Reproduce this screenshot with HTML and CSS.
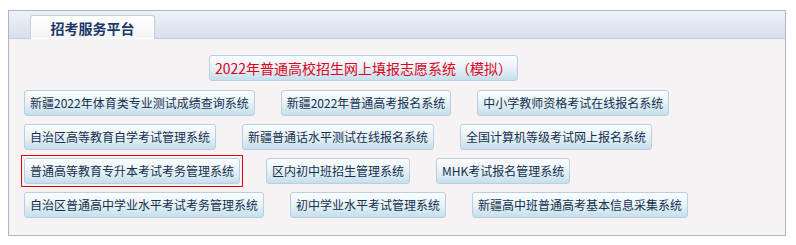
FILE: index.html
```html
<!DOCTYPE html>
<html>
<head>
    <meta charset="utf-8">
    <title>招考服务平台</title>
    <link rel="stylesheet" href="styles.css">
</head>
<body>
    <div class="panel">
        <div class="panel-head">
            <div class="tab">招考服务平台</div>
        </div>
        <div class="panel-body">
            <div class="row row-main">
                <a class="btn btn-main" href="#">2022年普通高校招生网上填报志愿系统（模拟）</a>
            </div>
            <div class="row">
                <a class="btn" href="#">新疆2022年体育类专业测试成绩查询系统</a>
                <a class="btn" href="#">新疆2022年普通高考报名系统</a>
                <a class="btn" href="#">中小学教师资格考试在线报名系统</a>
            </div>
            <div class="row">
                <a class="btn" href="#">自治区高等教育自学考试管理系统</a>
                <a class="btn" href="#">新疆普通话水平测试在线报名系统</a>
                <a class="btn" href="#">全国计算机等级考试网上报名系统</a>
            </div>
            <div class="row">
                <a class="btn btn-marked" href="#">普通高等教育专升本考试考务管理系统</a>
                <a class="btn" href="#">区内初中班招生管理系统</a>
                <a class="btn" href="#">MHK考试报名管理系统</a>
            </div>
            <div class="row">
                <a class="btn" href="#">自治区普通高中学业水平考试考务管理系统</a>
                <a class="btn" href="#">初中学业水平考试管理系统</a>
                <a class="btn" href="#">新疆高中班普通高考基本信息采集系统</a>
            </div>
        </div>
    </div>
</body>
</html>
```

FILE: styles.css
```css
body {
    margin: 0;
    background: #ffffff;
    font-family: "Noto Sans CJK SC", "Liberation Sans", sans-serif;
}
.panel {
    width: 776px;
    margin: 10px 0 0 8px;
    border: 1px solid #a9b6cc;
    background: #f7f3f5;
}
.panel-head {
    height: 27px;
    background: linear-gradient(#eef2f8, #d8e0ec);
    border-bottom: 1px solid #c3cddd;
    position: relative;
}
.tab {
    position: absolute;
    left: 21px;
    top: 4px;
    width: 123px;
    height: 23px;
    border: 1px solid #c2cddd;
    border-bottom: none;
    border-radius: 3px 3px 0 0;
    background: linear-gradient(#ffffff, #f2f4f9);
    box-shadow: inset 0 0 0 1px #ffffff;
    color: #1d3766;
    font-size: 14px;
    font-weight: bold;
    line-height: 25px;
    text-align: center;
}
.panel-body {
    padding: 16px 15px 17px 15px;
}
.row {
    display: flex;
    gap: 26px;
    margin-bottom: 8px;
}
.row:last-child {
    margin-bottom: 0;
}
.row-main {
    padding-left: 185px;
    margin-bottom: 9px;
}
.btn {
    display: block;
    height: 24px;
    padding: 0 5px;
    border: 1px solid #b9cfdf;
    border-radius: 3px;
    background: linear-gradient(#fbfdfe 0%, #eaf3f8 45%, #c4dfec 100%);
    color: #15304d;
    font-size: 12px;
    line-height: 24px;
    text-decoration: none;
    white-space: nowrap;
}
.btn-main {
    font-size: 14px;
    color: #e0001a;
}
.btn-marked {
    position: relative;
}
.btn-marked::after {
    content: "";
    position: absolute;
    top: -4px;
    left: -4px;
    right: -4px;
    bottom: -4px;
    border: 1.5px solid #e3000f;
}
```
